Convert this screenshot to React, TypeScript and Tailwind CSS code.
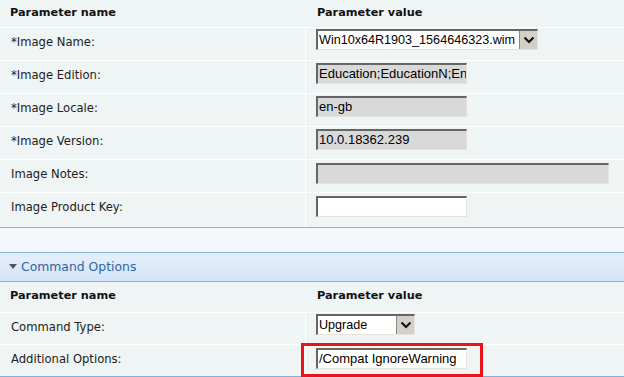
import React from "react";

const verdana = "font-['DejaVu_Sans',Verdana,sans-serif]";
const arial = "font-['Liberation_Sans',Arial,sans-serif]";
const label = `text-[11.6px] text-[#222] ${verdana}`;
const field = `h-[21px] border-t-2 border-l-2 border-b border-r border-t-[#666] border-l-[#666] border-b-[#e6e3dc] border-r-[#e6e3dc] px-[1px] text-[13px] leading-[18px] text-black ${arial} whitespace-nowrap overflow-hidden`;

const Chevron = () => (
  <svg width="12" height="8" viewBox="0 0 12 8">
    <path d="M1.5 1.5 L6 6 L10.5 1.5" stroke="#111" strokeWidth="2.2" fill="none" />
  </svg>
);

const Select = ({ value, width }: { value: string; width: string }) => (
  <div className={`flex ${width} h-[21px] border-t-2 border-l-2 border-b border-r border-t-[#666] border-l-[#666] border-b-[#e6e3dc] border-r-[#e6e3dc] bg-white`}>
    <div className={`flex-1 pl-[1px] text-[12.6px] leading-[18px] text-black ${arial} whitespace-nowrap overflow-hidden`}>
      {value}
    </div>
    <div className="w-[18px] h-full bg-[#d4d0c8] border-l border-[#888] flex items-center justify-center">
      <Chevron />
    </div>
  </div>
);

const Heads = () => (
  <>
    <div className={`w-[306px] pl-[10px] text-[11.3px] font-bold text-[#111] ${verdana}`}>Parameter name</div>
    <div className={`pl-[11px] text-[11.3px] font-bold text-[#111] ${verdana}`}>Parameter value</div>
  </>
);

const Row = ({ name, children, h = "h-[33px]" }: { name: string; children: React.ReactNode; h?: string }) => (
  <div className={`flex ${h} border-t border-white`}>
    <div className={`w-[306px] border-r border-white pl-[11px] pt-[6px] ${label}`}>{name}</div>
    <div className="flex-1 pl-[10px] pt-[1px]">{children}</div>
  </div>
);

export default function App() {
  return (
    <div className="w-[624px] h-[377px] bg-[#f4f8fc] overflow-hidden">
      <div className="bg-[#eff4f5]">
        <div className="flex h-[27px] items-center">
          <Heads />
        </div>
        <Row name="*Image Name:">
          <Select value="Win10x64R1903_1564646323.wim" width="w-[222px]" />
        </Row>
        <Row name="*Image Edition:">
          <div className={`${field} w-[151px] bg-[#d9d9d9] mt-[1px]`}>Education;EducationN;Enterprise</div>
        </Row>
        <Row name="*Image Locale:">
          <div className={`${field} w-[151px] bg-[#d9d9d9] mt-[1px]`}>en-gb</div>
        </Row>
        <Row name="*Image Version:">
          <div className={`${field} w-[151px] bg-[#d9d9d9] mt-[1px]`}>10.0.18362.239</div>
        </Row>
        <Row name="Image Notes:">
          <div className={`${field} w-[293px] bg-[#d9d9d9] mt-[2px]`}></div>
        </Row>
        <Row name="Image Product Key:" h="h-[35px]">
          <div className={`${field} w-[151px] bg-white mt-[2px]`}></div>
        </Row>
      </div>
      <div className="h-[25px] border-t border-[#7fb2df]" />
      <div className="h-[30px] border-y border-[#7fb2df] bg-gradient-to-b from-[#e6effb] to-[#d3e4f8] flex items-center pl-[9px] gap-[4px]">
        <svg width="8" height="6" viewBox="0 0 8 6">
          <path d="M0 0 L8 0 L4 5 Z" fill="#555" />
        </svg>
        <span className={`text-[12.4px] text-[#2f66a2] ${verdana}`}>Command Options</span>
      </div>
      <div className="bg-[#eff4f5] border-b border-[#7fb2df]">
        <div className="h-[30px] flex items-end pb-[7px]">
          <Heads />
        </div>
        <Row name="Command Type:" h="h-[32px]">
          <Select value="Upgrade" width="w-[99px]" />
        </Row>
        <Row name="Additional Options:" h="h-[32px]">
          <div className="relative">
            <div className={`${field} w-[151px] bg-white mt-[2px]`}>/Compat IgnoreWarning</div>
            <div className="absolute left-[-15px] top-[-5px] w-[182px] h-[34px] border-[3px] border-[#e8141c]" />
          </div>
        </Row>
      </div>
    </div>
  );
}
